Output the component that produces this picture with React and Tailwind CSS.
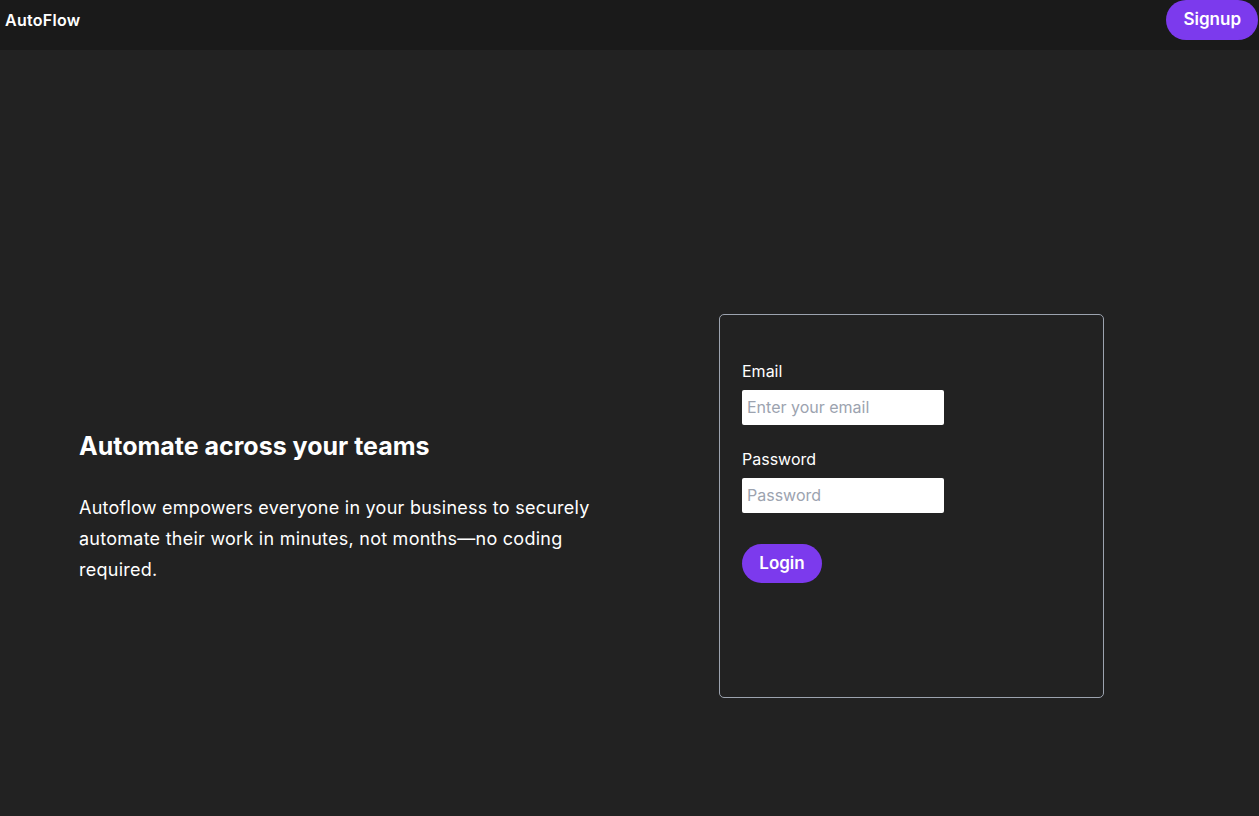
export default function App() {
  return (
    <div className="min-h-screen bg-[#222222] text-white" style={{ fontFamily: "Inter, 'Noto Sans', sans-serif" }}>
      <header className="h-[50px] bg-[#1a1a1a] flex items-start justify-between">
        <div className="pl-[5px] pt-[10px] text-[16px] leading-[20px] font-semibold tracking-[0.3px]">AutoFlow</div>
        <button className="h-[40px] px-[17px] rounded-full bg-[#7c3aed] text-white text-[17px] font-semibold mr-[1px]">Signup</button>
      </header>
      <main className="pt-[264px] pb-[118px]">
        <div className="flex items-center">
          <div className="pl-[79px] w-[619px] shrink-0">
            <h1 className="text-[25px] leading-[32px] font-bold pt-[2px] mb-[30px]">Automate across your teams</h1>
            <p className="text-[18px] leading-[31px] tracking-[0.25px]">
              Autoflow empowers everyone in your business to securely automate their work in minutes, not months—no coding required.
            </p>
          </div>
          <div className="ml-[100px] w-[385px] h-[384px] border border-[#9ca3af] rounded-[5px] pl-[22px] pt-[44px]">
            <label className="block text-[16px] leading-[24px] mb-[7px]">Email</label>
            <input
              type="email"
              placeholder="Enter your email"
              className="block w-[202px] h-[35px] bg-white rounded-[2px] px-[5px] pb-[1px] text-[16px] text-black placeholder:text-[#9ca3af] outline-none"
            />
            <label className="block text-[16px] leading-[24px] mt-[22px] mb-[7px]">Password</label>
            <input
              type="password"
              placeholder="Password"
              className="block w-[202px] h-[35px] bg-white rounded-[2px] px-[5px] pb-[1px] text-[16px] text-black placeholder:text-[#9ca3af] outline-none"
            />
            <button className="mt-[31px] w-[80px] h-[39px] rounded-full bg-[#7c3aed] text-white text-[17px] font-semibold">Login</button>
          </div>
        </div>
      </main>
    </div>
  );
}
